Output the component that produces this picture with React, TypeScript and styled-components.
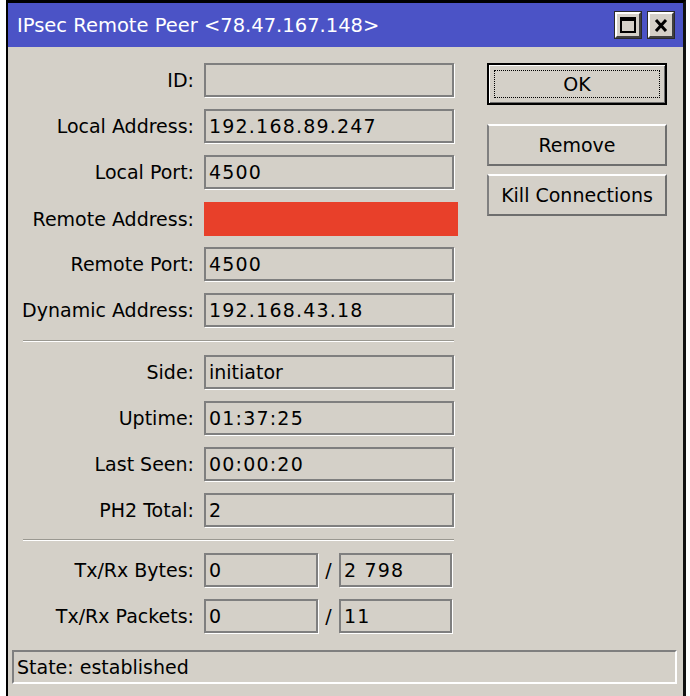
import styled, { createGlobalStyle } from "styled-components";

const GlobalStyle = createGlobalStyle`
  body {
    margin: 0;
    background: #ffffff;
    font-family: "DejaVu Sans", "Liberation Sans", sans-serif;
    font-size: 19px;
    color: #000;
  }
`;

const Page = styled.div`
  width: 690px;
  height: 696px;
  overflow: hidden;
  padding-left: 6px;
  box-sizing: border-box;
`;

const Window = styled.div`
  width: 680px;
  height: 700px;
  box-sizing: border-box;
  border: 2px solid #000;
  border-top-width: 3px;
  border-right: 3px solid #111;
  background: #d4d0c8;
  display: flex;
  flex-direction: column;
`;

const TitleBar = styled.div`
  height: 44px;
  background: #4b53c6;
  display: flex;
  align-items: center;
  padding: 0 9px 0 9px;
  color: #fff;
  font-size: 19.5px;
`;

const Title = styled.span`
  flex: 1;
`;

const TitleButton = styled.div`
  width: 26px;
  height: 26px;
  box-sizing: border-box;
  margin-left: 7px;
  background: #d4d0c8;
  border: 2px solid;
  border-color: #fff #404040 #404040 #fff;
  outline: 1px solid #2a2a2a;
  display: flex;
  align-items: center;
  justify-content: center;
`;

const Body = styled.div`
  flex: 1;
  display: flex;
  flex-direction: column;
`;

const Main = styled.div`
  display: flex;
  padding-top: 16px;
  gap: 29px;
`;

const Form = styled.div`
  width: 450px;
  display: flex;
  flex-direction: column;
  gap: 12px;
`;

const Row = styled.div`
  display: grid;
  grid-template-columns: 186px auto;
  column-gap: 10px;
  height: 34px;
  align-items: center;
`;

const Label = styled.span`
  text-align: right;
  white-space: nowrap;
`;

const Field = styled.div<{ $width?: number; $red?: boolean; $numeric?: boolean }>`
  width: ${(p) => p.$width ?? 250}px;
  height: 34px;
  box-sizing: border-box;
  display: flex;
  align-items: center;
  padding-left: 3px;
  white-space: nowrap;
  letter-spacing: ${(p) => (p.$numeric ? "1.2px" : "0")};
  ${(p) =>
    p.$red
      ? `background: #e8402a; width: 254px; margin-top: 1px;`
      : `border: 2px solid #7f7f7f; box-shadow: 1px 1px 0 #fff;`}
`;

const Pair = styled.div`
  display: flex;
  align-items: center;
`;

const Slash = styled.span`
  width: 21px;
  text-align: center;
`;

const Separator = styled.div<{ $tight?: boolean }>`
  margin: ${(p) => (p.$tight ? "0" : "1px")} 0 ${(p) => (p.$tight ? "0" : "1px")} 15px;
  width: 431px;
  height: 1px;
  background: #9a9891;
  border-bottom: 1px solid #fff;
`;

const Buttons = styled.div`
  display: flex;
  flex-direction: column;
  width: 180px;
`;

const Button = styled.div<{ $default?: boolean }>`
  height: 42px;
  box-sizing: border-box;
  display: flex;
  align-items: center;
  justify-content: center;
  border: 2px solid;
  border-color: #fff #6e6e6e #6e6e6e #808080;
  ${(p) =>
    p.$default &&
    `
    border: 2px solid #000;
    box-shadow: inset 1px 1px 0 #fff, inset -1px -1px 0 #6e6e6e;
  `}
`;

const Focus = styled.span`
  border: 1px dotted #000;
  width: 166px;
  height: 28px;
  display: flex;
  align-items: center;
  justify-content: center;
  box-sizing: border-box;
`;

const StatusBar = styled.div`
  margin: 17px 6px 0 4px;
  height: 34px;
  box-sizing: border-box;
  border: 2px solid;
  border-color: #7f7f7f #fff #fff #7f7f7f;
  display: flex;
  align-items: center;
  padding-left: 3px;
`;

type Item = { label: string; value?: string; red?: boolean };

const top: Item[] = [
  { label: "ID:", value: "" },
  { label: "Local Address:", value: "192.168.89.247" },
  { label: "Local Port:", value: "4500" },
  { label: "Remote Address:", red: true },
  { label: "Remote Port:", value: "4500" },
  { label: "Dynamic Address:", value: "192.168.43.18" },
];

const mid: Item[] = [
  { label: "Side:", value: "initiator" },
  { label: "Uptime:", value: "01:37:25" },
  { label: "Last Seen:", value: "00:00:20" },
  { label: "PH2 Total:", value: "2" },
];

const traffic = [
  { label: "Tx/Rx Bytes:", tx: "0", rx: "2 798" },
  { label: "Tx/Rx Packets:", tx: "0", rx: "11" },
];

const isNumeric = (v?: string) => !!v && /^[\d.: ]+$/.test(v);

const renderRow = (it: Item) => (
  <Row key={it.label}>
    <Label>{it.label}</Label>
    <Field $red={it.red} $numeric={isNumeric(it.value)}>
      {it.value}
    </Field>
  </Row>
);

export default function App() {
  return (
    <Page>
      <GlobalStyle />
      <Window>
        <TitleBar>
          <Title>IPsec Remote Peer &lt;78.47.167.148&gt;</Title>
          <TitleButton>
            <svg width="16" height="16" viewBox="0 0 16 16">
              <rect x="1" y="1" width="14" height="14" fill="none" stroke="#000" strokeWidth="2" />
              <rect x="1" y="1" width="14" height="3" fill="#000" />
            </svg>
          </TitleButton>
          <TitleButton>
            <svg width="14" height="13" viewBox="0 0 14 13">
              <path d="M2 1 L12 12 M12 1 L2 12" stroke="#000" strokeWidth="3" />
            </svg>
          </TitleButton>
        </TitleBar>
        <Body>
          <Main>
            <Form>
              {top.map(renderRow)}
              <Separator />
              {mid.map(renderRow)}
              <Separator $tight />
              {traffic.map((t) => (
                <Row key={t.label}>
                  <Label>{t.label}</Label>
                  <Pair>
                    <Field $width={114} $numeric>
                      {t.tx}
                    </Field>
                    <Slash>/</Slash>
                    <Field $width={113} $numeric>
                      {t.rx}
                    </Field>
                  </Pair>
                </Row>
              ))}
            </Form>
            <Buttons>
              <Button $default>
                <Focus>OK</Focus>
              </Button>
              <Button style={{ marginTop: 19 }}>Remove</Button>
              <Button style={{ marginTop: 8 }}>Kill Connections</Button>
            </Buttons>
          </Main>
          <StatusBar>State: established</StatusBar>
        </Body>
      </Window>
    </Page>
  );
}
